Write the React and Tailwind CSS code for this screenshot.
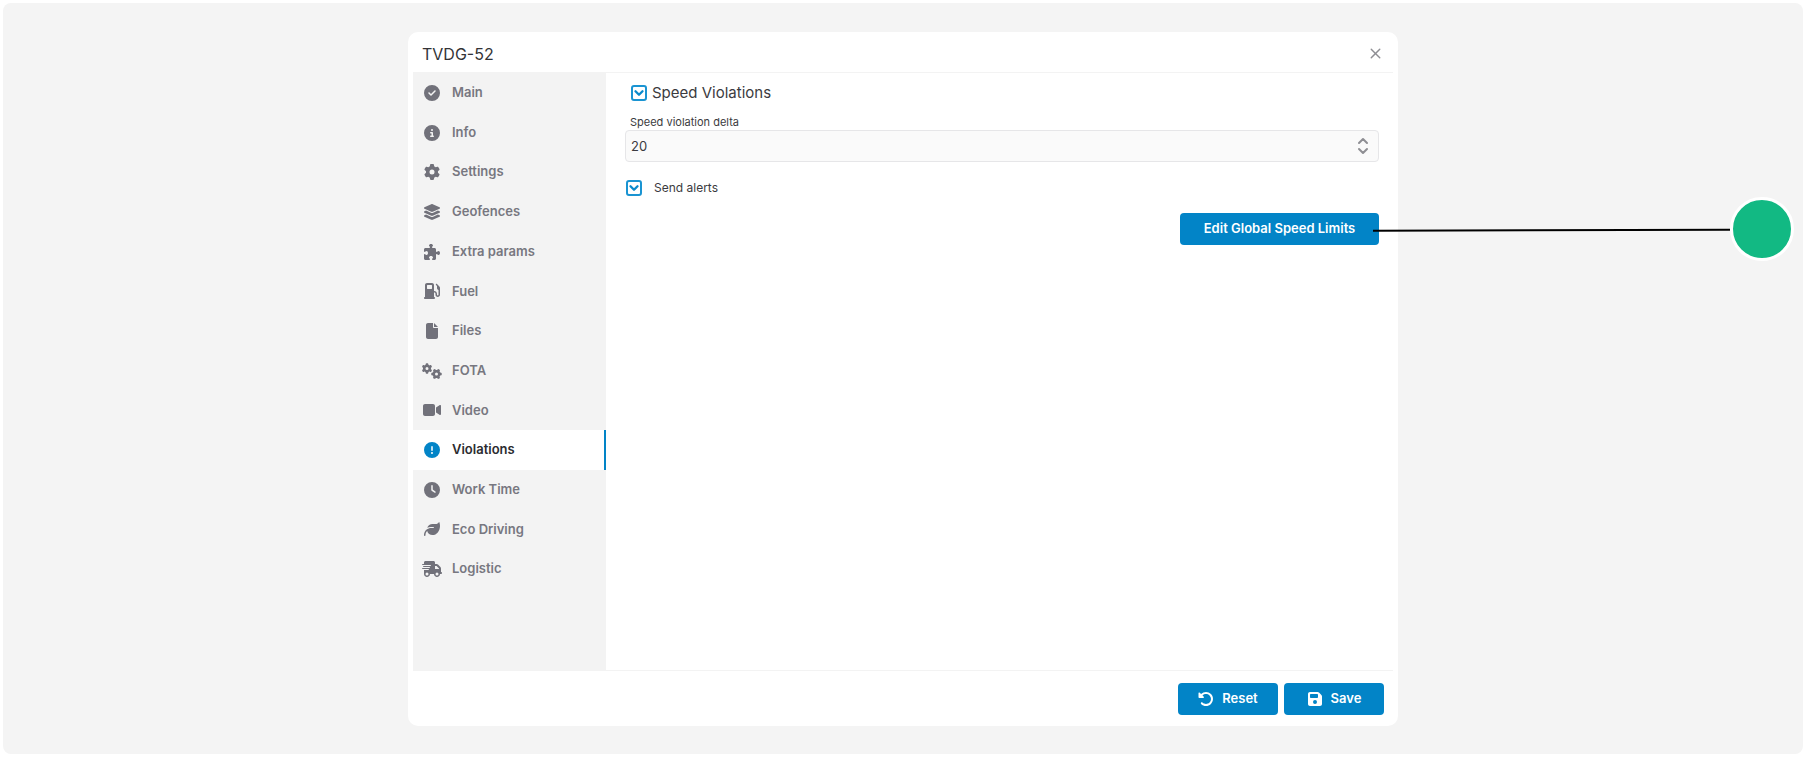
import React, { useState } from 'react'
import {
  FaCircleCheck,
  FaCircleInfo,
  FaGear,
  FaLayerGroup,
  FaPuzzlePiece,
  FaGasPump,
  FaFile,
  FaGears,
  FaVideo,
  FaCircleExclamation,
  FaClock,
  FaLeaf,
  FaTruckFast,
  FaRotateLeft,
  FaFloppyDisk,
} from 'react-icons/fa6'
import { ChevronDown, ChevronUp, X } from 'lucide-react'

const TABS = [
  { label: 'Main', icon: FaCircleCheck },
  { label: 'Info', icon: FaCircleInfo },
  { label: 'Settings', icon: FaGear },
  { label: 'Geofences', icon: FaLayerGroup },
  { label: 'Extra params', icon: FaPuzzlePiece },
  { label: 'Fuel', icon: FaGasPump },
  { label: 'Files', icon: FaFile },
  { label: 'FOTA', icon: FaGears },
  { label: 'Video', icon: FaVideo },
  { label: 'Violations', icon: FaCircleExclamation },
  { label: 'Work Time', icon: FaClock },
  { label: 'Eco Driving', icon: FaLeaf },
  { label: 'Logistic', icon: FaTruckFast },
]

function Checkbox({ id, checked, onChange }) {
  return (
    <span className="relative flex size-4 shrink-0">
      <input
        id={id}
        type="checkbox"
        checked={checked}
        onChange={e => onChange(e.target.checked)}
        className="size-4 appearance-none rounded-[3px] border-2 border-[#1a94d2] bg-white"
      />
      {checked && (
        <ChevronDown
          size={14}
          strokeWidth={4}
          className="pointer-events-none absolute inset-0 m-auto text-[#0a8acc]"
        />
      )}
    </span>
  )
}

function PrimaryButton({ icon: Icon, children, className }) {
  return (
    <button
      type="button"
      className={`flex h-8 items-center justify-center rounded-[4px] bg-[#0284c7] text-[13px] font-semibold text-white ${className}`}
    >
      {Icon && <Icon size={16} />}
      {children}
    </button>
  )
}

function Sidebar({ active, onSelect }) {
  return (
    <nav className="w-[193px] shrink-0 bg-[#f3f3f3]">
      <ul className="flex h-[516px] flex-col">
        {TABS.map(({ label, icon: Icon }) => {
          const isActive = label === active
          return (
            <li key={label} className="flex-1">
              <button
                type="button"
                onClick={() => onSelect(label)}
                className={`flex h-full w-full items-center gap-2 border-r-2 pl-[7px] text-[13px] font-semibold ${
                  isActive
                    ? 'border-[#0284c7] bg-white text-[#2b2b2f]'
                    : 'border-transparent text-[#777780]'
                }`}
              >
                <span className={`flex w-6 justify-center ${isActive ? 'text-[#0284c7]' : 'text-[#71717a]'}`}>
                  <Icon className="h-4 w-5" />
                </span>
                {label}
              </button>
            </li>
          )
        })}
      </ul>
    </nav>
  )
}

function SpeedViolations() {
  const [enabled, setEnabled] = useState(true)
  const [alerts, setAlerts] = useState(true)
  const [delta, setDelta] = useState(20)

  return (
    <section className="flex-1 pr-[14px] pl-[19px]">
      <div className="flex items-center gap-[5px] pt-2 pl-[6px]">
        <Checkbox id="speed-enabled" checked={enabled} onChange={setEnabled} />
        <label htmlFor="speed-enabled" className="text-[15px] leading-6">Speed Violations</label>
      </div>

      <label htmlFor="speed-delta" className="mt-[9px] block pl-[5px] text-[11px] leading-4">
        Speed violation delta
      </label>
      <div className="flex h-8 items-center rounded-[4px] border border-[#e6e6e8] bg-[#fafafa] pr-[7px]">
        <input
          id="speed-delta"
          type="number"
          value={delta}
          onChange={e => setDelta(Number(e.target.value))}
          className="h-full min-w-0 flex-1 bg-transparent px-[5px] text-[13px] outline-none [appearance:textfield] [&::-webkit-inner-spin-button]:appearance-none"
        />
        <div className="flex flex-col text-[#8e8e93]">
          <button
            type="button"
            aria-label="Increase"
            className="flex h-[10px] items-center"
            onClick={() => setDelta(delta + 1)}
          >
            <ChevronUp size={16} strokeWidth={3} />
          </button>
          <button
            type="button"
            aria-label="Decrease"
            className="flex h-[10px] items-center"
            onClick={() => setDelta(delta - 1)}
          >
            <ChevronDown size={16} strokeWidth={3} />
          </button>
        </div>
      </div>

      <div className="mt-4 flex items-center gap-3 pl-px">
        <Checkbox id="send-alerts" checked={alerts} onChange={setAlerts} />
        <label htmlFor="send-alerts" className="text-xs leading-5">Send alerts</label>
      </div>

      <div className="mt-[15px] flex justify-end">
        <div className="relative">
          <PrimaryButton className="w-[199px]">Edit Global Speed Limits</PrimaryButton>
          {/* Callout line and marker */}
          <div className="pointer-events-none absolute inset-y-0 left-full -ml-[6px] flex items-center">
            <svg width="357" height="6" viewBox="0 0 357 6" className="shrink-0" aria-hidden="true">
              <line x1="0" y1="4.7" x2="357" y2="3.7" stroke="#000" strokeWidth="2" />
            </svg>
            <span className="size-16 shrink-0 rounded-full border-3 border-white bg-[#12b983]" />
          </div>
        </div>
      </div>
    </section>
  )
}

export default function App() {
  const [active, setActive] = useState('Violations')

  return (
    <div className="flex min-h-screen bg-white pt-[3px] pr-3 pb-1 pl-[3px] font-['Inter',sans-serif] text-[#3b3b40]">
      <main className="flex flex-1 items-start justify-center rounded-lg bg-[#f4f4f4] pt-[29px] pb-7">
        <div className="flex w-full max-w-[990px] flex-col rounded-[10px] bg-white px-[5px]">
          <header className="flex h-10 items-center justify-between pt-[3px] pr-[9px] pl-[9px]">
            <h1 className="text-base text-[#333336]">TVDG-52</h1>
            <button type="button" aria-label="Close" className="text-[#8e8e93]">
              <X size={17} strokeWidth={2} />
            </button>
          </header>

          <div className="flex min-h-[599px] border-y border-[#f3f3f3]">
            <Sidebar active={active} onSelect={setActive} />
            <SpeedViolations />
          </div>

          <footer className="flex justify-end gap-[6px] px-[9px] pt-3 pb-[11px]">
            <PrimaryButton icon={FaRotateLeft} className="w-[100px] gap-2">Reset</PrimaryButton>
            <PrimaryButton icon={FaFloppyDisk} className="w-[100px] gap-2">Save</PrimaryButton>
          </footer>
        </div>
      </main>
    </div>
  )
}
